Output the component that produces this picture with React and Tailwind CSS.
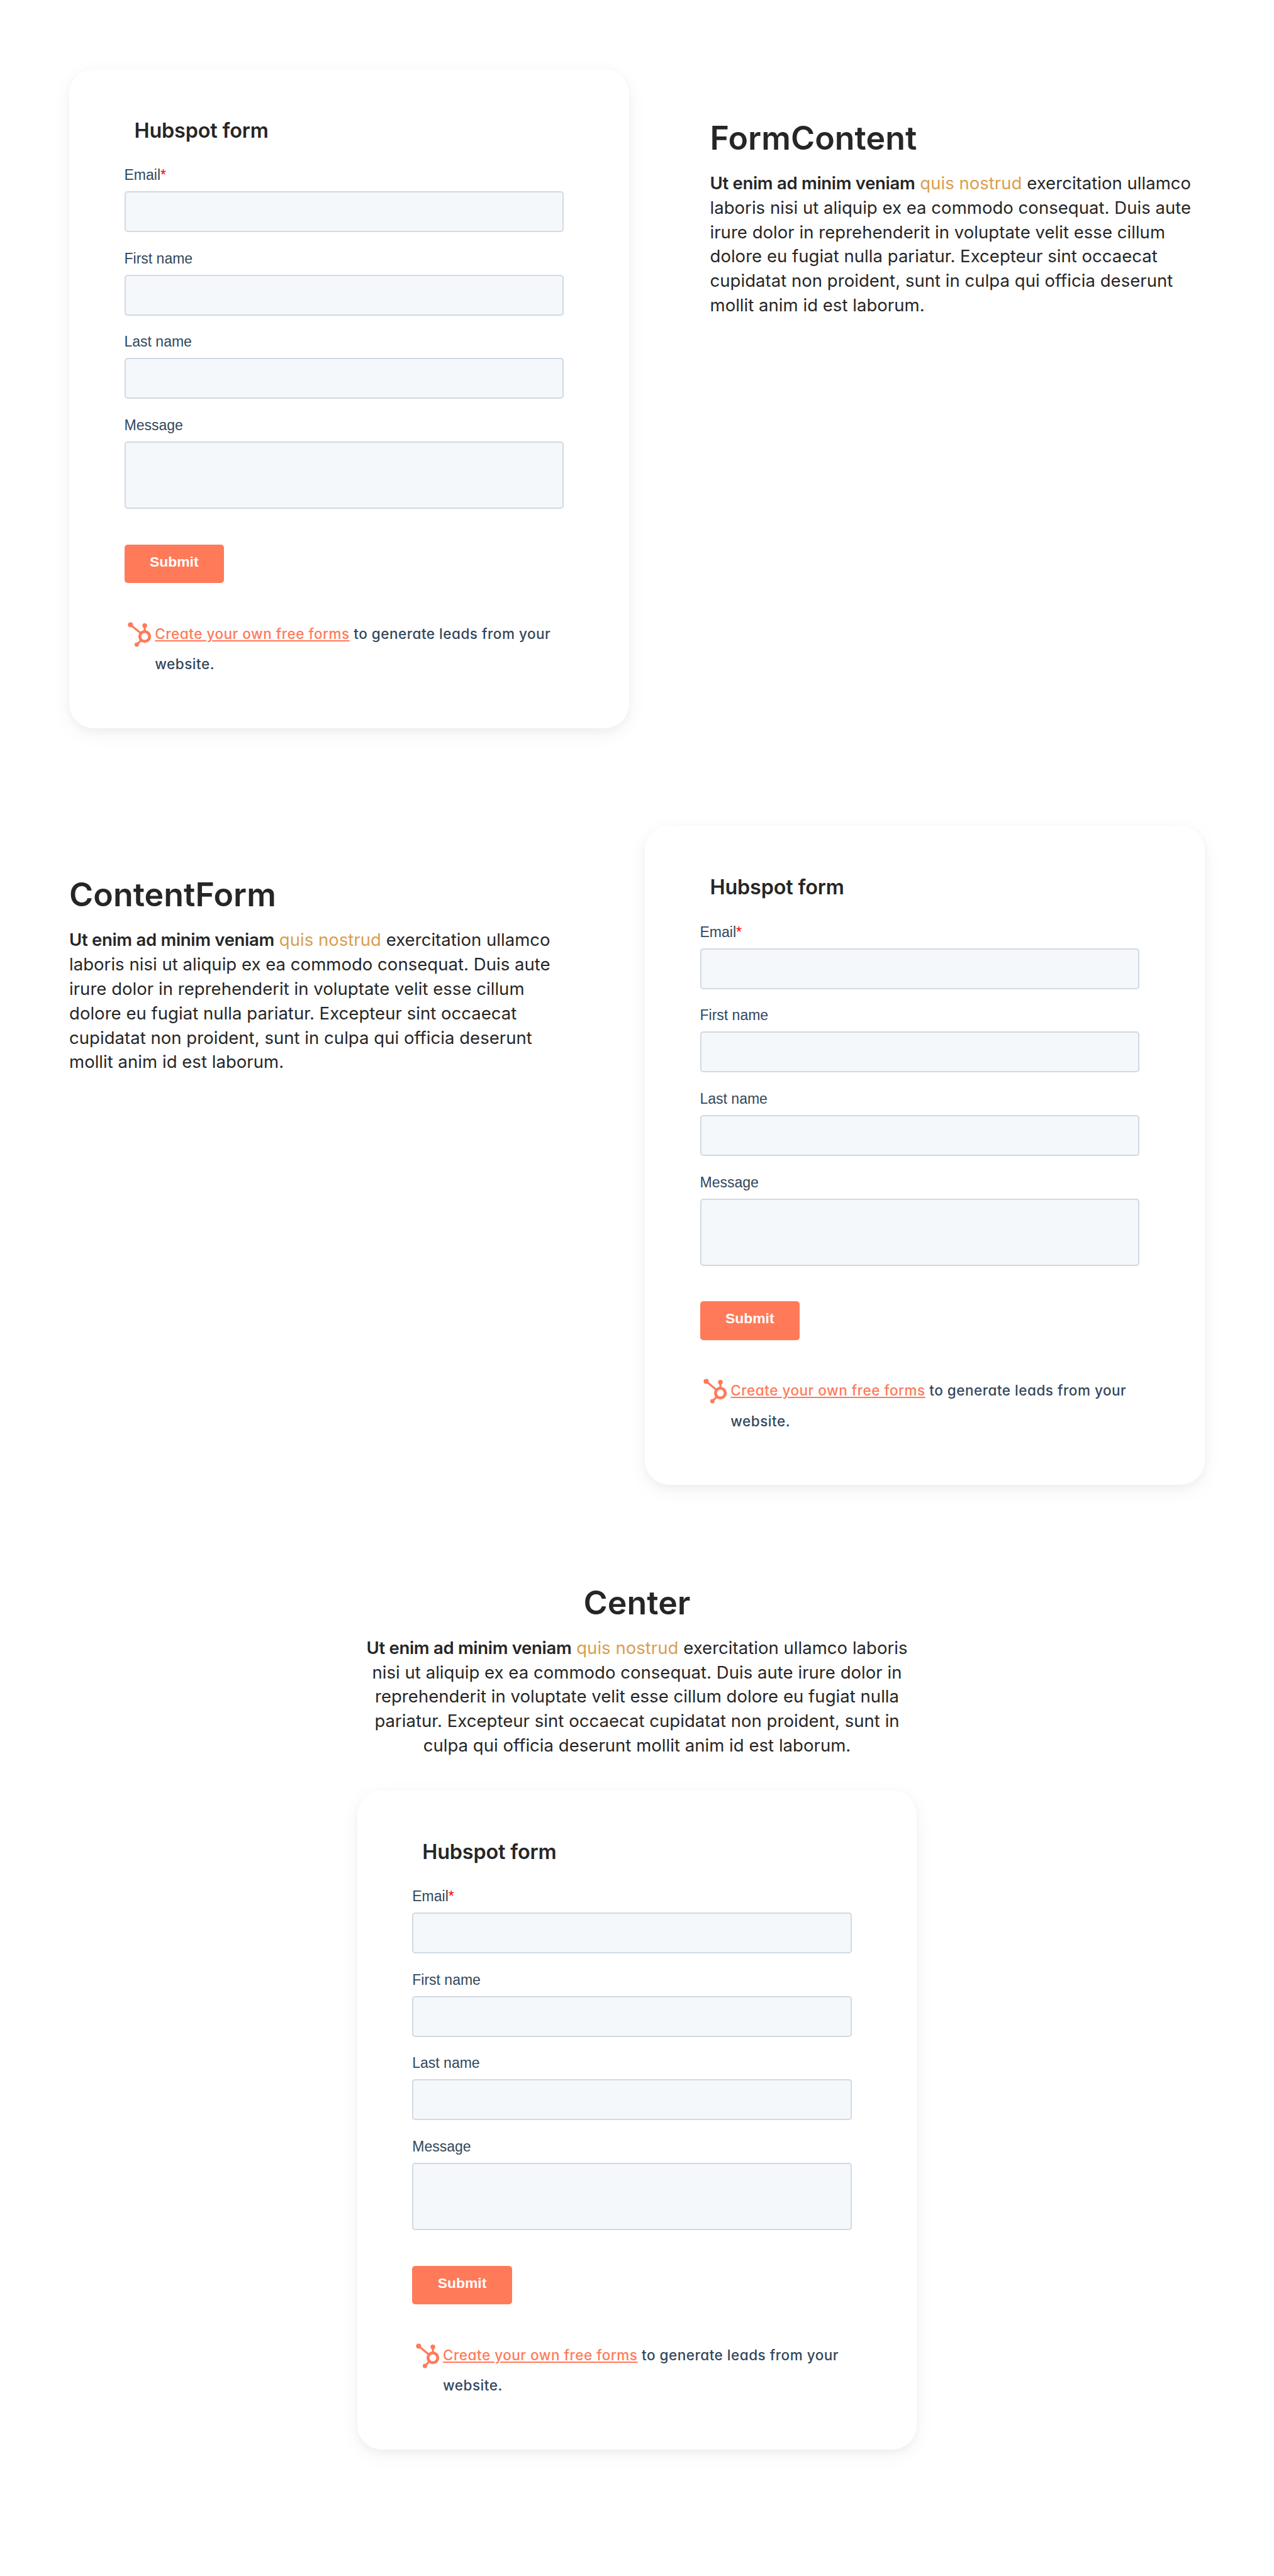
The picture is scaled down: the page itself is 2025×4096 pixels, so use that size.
const SHADOW = "shadow-[0_5px_14px_rgba(0,0,0,0.045),0_9px_36px_rgba(0,0,0,0.045)]";

function Sprocket() {
  return (
    <svg viewBox="0 0 50 54" className="mt-[3.2px] h-[43.7px] w-[40.4px] shrink-0" fill="none" stroke="#ff7a59">
      <circle cx="34.7" cy="31" r="9.65" strokeWidth="5.8" />
      <path d="M34.7 20V10M26.5 24 6.7 8M27.5 38.5 19 47" strokeWidth="4" />
      <g fill="#ff7a59" stroke="none">
        <circle cx="6.7" cy="8" r="5" />
        <circle cx="34.7" cy="9.5" r="4.6" />
        <circle cx="19" cy="47" r="4.2" />
      </g>
    </svg>
  );
}

function Field({ label, required, multiline }) {
  return (
    <label className="block">
      <span className="block h-[39px] text-[23px] leading-[27px] text-[#33475b]">
        {label}
        {required && <span className="text-[#ff0000]">*</span>}
      </span>
      {multiline ? (
        <textarea className="block h-[107px] w-full resize-none rounded-[5px] border-2 border-[#d0d9e5] bg-[#f5f8fa]" />
      ) : (
        <input className="block h-[65px] w-full rounded-[5px] border-2 border-[#d0d9e5] bg-[#f5f8fa]" />
      )}
    </label>
  );
}

function FormCard() {
  return (
    <div className={`h-[1048px] w-[889.5px] shrink-0 rounded-[39px] bg-white pt-[75px] pr-[103.5px] pl-[87.5px] ${SHADOW}`}>
      <h3 className="ml-[16px] h-[80.2px] text-[32.35px] leading-[45px] font-semibold tracking-[-0.15px]">Hubspot form</h3>
      <form className="flex flex-col gap-[28.65px] font-['Liberation_Sans',sans-serif]">
        <Field label="Email" required />
        <Field label="First name" />
        <Field label="Last name" />
        <Field label="Message" multiline />
        <button
          type="button"
          className="mt-[28px] flex h-[61.5px] w-[158.5px] justify-center rounded-[5px] bg-[#ff7a59] pt-[14px] text-[22.9px] leading-[27px] font-bold text-white"
        >
          Submit
        </button>
      </form>
      <div className="mt-[56.6px] flex pl-[4.8px]">
        <Sprocket />
        <p className="ml-[3.6px] text-[22.5px] leading-[48.5px] font-medium tracking-[0.51px] whitespace-nowrap text-[#33475b] [font-feature-settings:'cv11']">
          <a className="text-[#ff7a59] underline decoration-2 underline-offset-[2px]">Create your own free forms</a> to generate
          leads from your
          <br />
          website.
        </p>
      </div>
    </div>
  );
}

function Content({ title }) {
  return (
    <div>
      <h2 className="text-[51.8px] leading-[62px] font-semibold tracking-[0.1px]">{title}</h2>
      <p className="mt-[22px] text-[27.5px] leading-[38.82px] tracking-[0.04px]">
        <strong className="font-semibold tracking-[-0.3px]">Ut enim ad minim veniam</strong>{" "}
        <a className="text-[#d99e4e]">quis nostrud</a> exercitation ullamco laboris nisi ut aliquip ex ea commodo
        consequat. Duis aute irure dolor in reprehenderit in voluptate velit esse cillum dolore eu fugiat nulla
        pariatur. Excepteur sint occaecat cupidatat non proident, sunt in culpa qui officia deserunt mollit anim id est
        laborum.
      </p>
    </div>
  );
}

export default function App() {
  return (
    <main className="flex h-[4096px] w-[2025px] flex-col bg-white px-[110px] pt-[110px] font-[Inter,sans-serif] text-[#262626]">
      <section className="flex h-[1203.4px] gap-[26px]">
        <FormCard />
        <div className="w-[889px] pt-[78px] pl-[103px]">
          <Content title="FormContent" />
        </div>
      </section>
      <section className="flex h-[1203.4px] gap-[26px]">
        <div className="w-[889px] pt-[78px] pr-[103px]">
          <Content title="ContentForm" />
        </div>
        <FormCard />
      </section>
      <section className="flex flex-col items-center">
        <div className="h-[330px] w-[889.5px] text-center">
          <Content title="Center" />
        </div>
        <FormCard />
      </section>
    </main>
  );
}
